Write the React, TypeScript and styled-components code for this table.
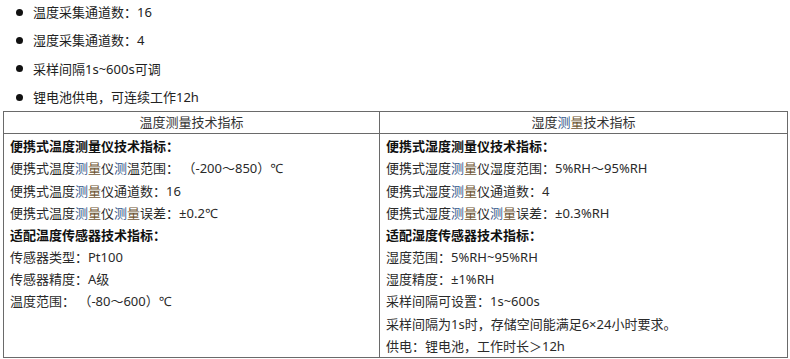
import * as React from "react";
import styled, { createGlobalStyle } from "styled-components";

const GlobalStyle = createGlobalStyle`
    html, body {
        margin: 0;
        padding: 0;
        background: #ffffff;
    }
    body {
        font-family: "Noto Sans", "Noto Sans CJK SC", "Liberation Sans", sans-serif;
        font-size: 13px;
        color: #222222;
    }
`;

const Page = styled.div`
    padding: 1px 3px 0 3px;
    width: 784px;
`;

const List = styled.ul`
    list-style: none;
    margin: 0;
    padding: 0;
`;

const Item = styled.li`
    display: flex;
    align-items: center;
    height: 22px;
    line-height: 22px;
    margin-bottom: 6.4px;
    padding-left: 13px;
    &:last-child {
        margin-bottom: 3px;
    }
`;

const Dot = styled.span`
    width: 7px;
    height: 7px;
    border-radius: 50%;
    background: #111111;
    margin-right: 10px;
    flex-shrink: 0;
`;

const Table = styled.div`
    display: grid;
    grid-template-columns: 376px 1fr;
    border: 1px solid #6a6a6a;
    box-sizing: border-box;
    width: 785px;
`;

const HeadCell = styled.div<{ $last?: boolean }>`
    height: 21px;
    line-height: 21px;
    text-align: center;
    border-bottom: 1px solid #6a6a6a;
    border-right: ${(p) => (p.$last ? "none" : "1px solid #6a6a6a")};
    color: #333333;
`;

const Cell = styled.div<{ $last?: boolean }>`
    padding: 1px 6px 0 6px;
    border-right: ${(p) => (p.$last ? "none" : "1px solid #6a6a6a")};
`;

const Line = styled.div<{ $bold?: boolean }>`
    height: 22.2px;
    line-height: 22.2px;
    white-space: nowrap;
    font-weight: ${(p) => (p.$bold ? 700 : 400)};
    color: ${(p) => (p.$bold ? "#111111" : "#2a2a2a")};
`;

const Ce = styled.span<{ $tone: "blue" | "amber" }>`
    color: ${(p) => (p.$tone === "blue" ? "#34588a" : "#6e5634")};
`;

// 测 / 量 carry a faint tint in the screenshot
const tint = (text: string) => {
    const parts: React.ReactNode[] = [];
    let buf = "";
    let k = 0;
    for (const ch of text) {
        if (ch === "测" || ch === "量") {
            if (buf) parts.push(buf);
            buf = "";
            parts.push(
                <Ce key={k++} $tone={ch === "测" ? "blue" : "amber"}>
                    {ch}
                </Ce>
            );
        } else {
            buf += ch;
        }
    }
    if (buf) parts.push(buf);
    return parts;
};

const bullets = [
    "温度采集通道数：16",
    "湿度采集通道数：4",
    "采样间隔1s~600s可调",
    "锂电池供电，可连续工作12h",
];

const left: [string, boolean][] = [
    ["便携式温度测量仪技术指标：", true],
    ["便携式温度测量仪测温范围： （-200～850）℃", false],
    ["便携式温度测量仪通道数：16", false],
    ["便携式温度测量仪测量误差：±0.2℃", false],
    ["适配温度传感器技术指标：", true],
    ["传感器类型：Pt100", false],
    ["传感器精度：A级", false],
    ["温度范围： （-80～600）℃", false],
];

const right: [string, boolean][] = [
    ["便携式湿度测量仪技术指标：", true],
    ["便携式湿度测量仪湿度范围：5%RH～95%RH", false],
    ["便携式湿度测量仪通道数：4", false],
    ["便携式湿度测量仪测量误差：±0.3%RH", false],
    ["适配湿度传感器技术指标：", true],
    ["湿度范围：5%RH~95%RH", false],
    ["湿度精度：±1%RH", false],
    ["采样间隔可设置：1s~600s", false],
    ["采样间隔为1s时，存储空间能满足6×24小时要求。", false],
    ["供电：锂电池，工作时长＞12h", false],
];

const renderLines = (rows: [string, boolean][]) =>
    rows.map(([t, b], i) => (
        <Line key={i} $bold={b}>
            {b ? t : tint(t)}
        </Line>
    ));

export default function App() {
    return (
        <>
            <GlobalStyle />
            <Page>
                <List>
                    {bullets.map((b, i) => (
                        <Item key={i}>
                            <Dot />
                            {b}
                        </Item>
                    ))}
                </List>
                <Table>
                    <HeadCell>温度测量技术指标</HeadCell>
                    <HeadCell $last>湿度{tint("测量")}技术指标</HeadCell>
                    <Cell>{renderLines(left)}</Cell>
                    <Cell $last>{renderLines(right)}</Cell>
                </Table>
            </Page>
        </>
    );
}
